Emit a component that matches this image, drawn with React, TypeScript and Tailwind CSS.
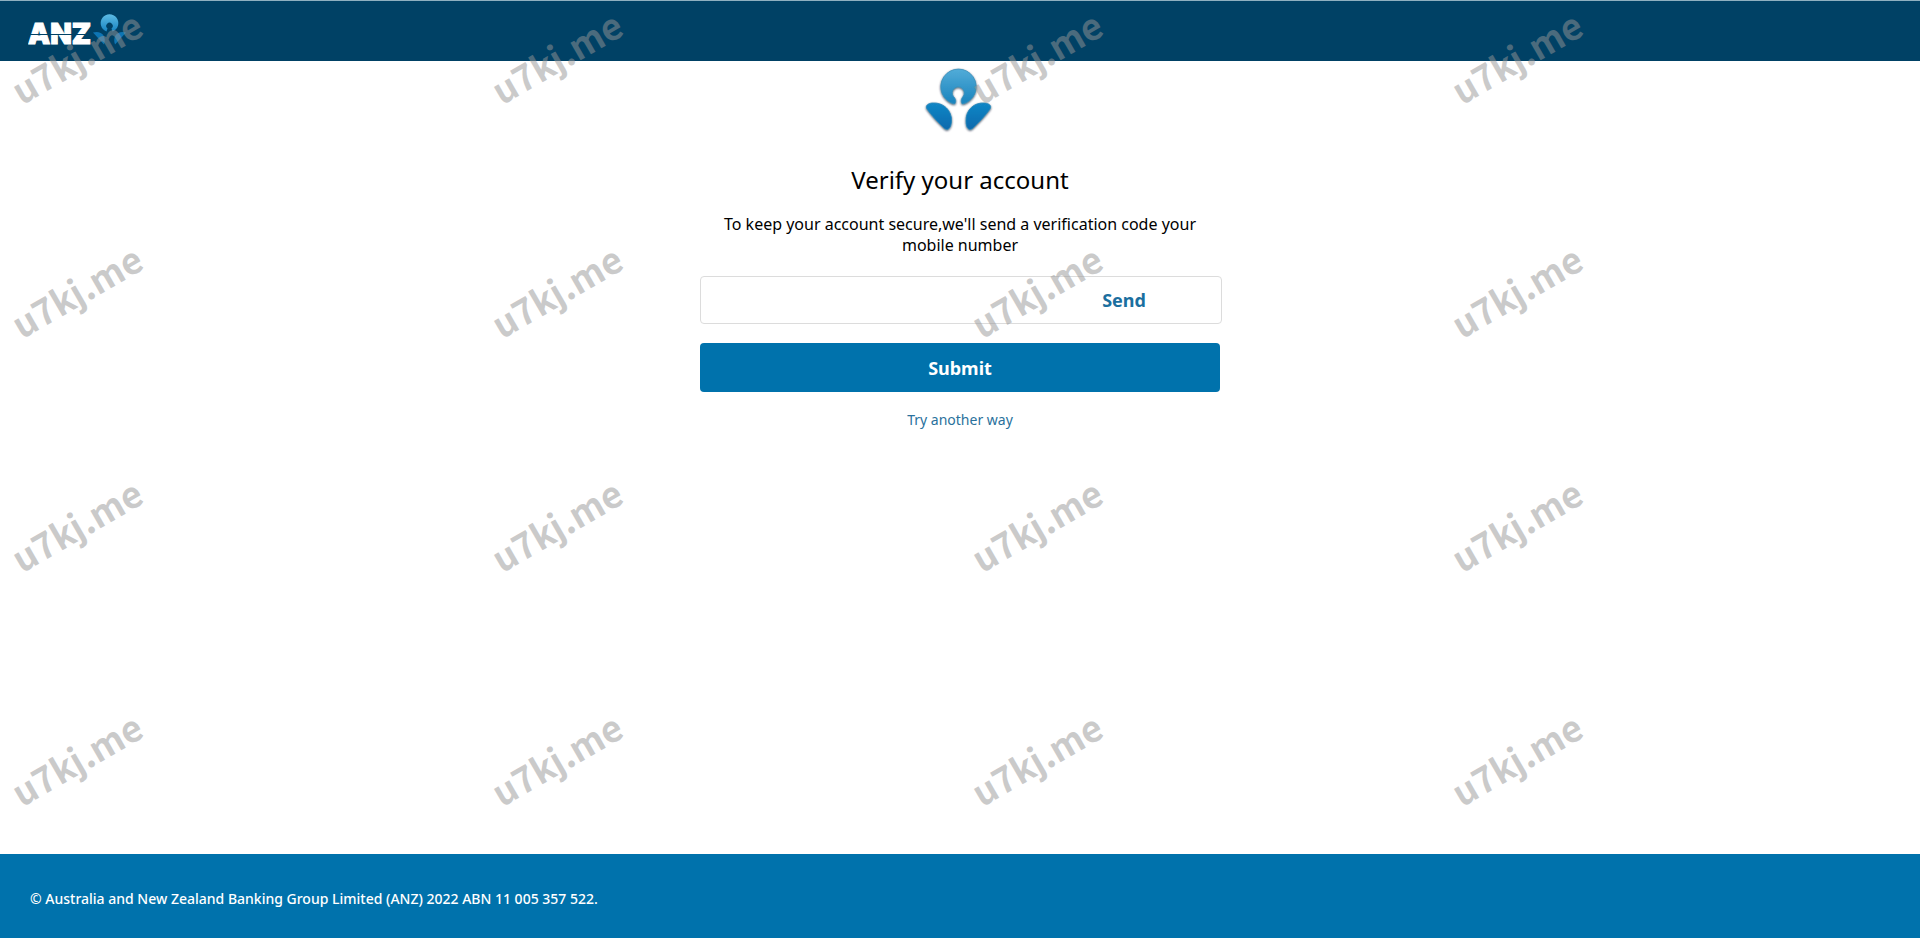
const columns = [0, 1, 2, 3];
const rows = [0, 1, 2, 3];

function Wordmark() {
  return (
    <svg width="104" height="40" viewBox="0 0 104 40" role="img" aria-label="ANZ">
      <defs>
        <linearGradient id="mark-small" x1="0" y1="0" x2="0" y2="1">
          <stop offset="0" stopColor="#5dbbe4" />
          <stop offset="1" stopColor="#1784c2" />
        </linearGradient>
      </defs>
      <text
        x="0"
        y="33"
        fontFamily="Inter, sans-serif"
        fontWeight="900"
        fontSize="28"
        fill="#ffffff"
        stroke="#ffffff"
        strokeWidth="1"
      >
        ANZ
      </text>
      <path d="M0 23.500H64" stroke="#004165" strokeWidth="1" />
      <path
        d="M78.500 20.400A8.800 8.800 0 1 1 84.500 20.400L83.500 17.500A3.200 3.200 0 1 0 79.500 17.500Z"
        fill="url(#mark-small)"
      />
      <path d="M65 21.500C73 19 79 25 76 33.500Z" fill="#0e75b4" />
      <path d="M98 21.500C90 19 84 25 87 33.500Z" fill="#0e75b4" />
    </svg>
  );
}

function LotusMark() {
  return (
    <svg className="overflow-visible" width="68" height="65" viewBox="0 0 68 65" aria-hidden="true">
      <defs>
        <linearGradient id="mark-top" x1="0" y1="0" x2="0" y2="1">
          <stop offset="0" stopColor="#52acd8" />
          <stop offset="1" stopColor="#1983bd" />
        </linearGradient>
        <linearGradient id="mark-leaf" x1="0" y1="0" x2="0" y2="1">
          <stop offset="0" stopColor="#1287c6" />
          <stop offset="1" stopColor="#0969ad" />
        </linearGradient>
        <filter id="mark-shadow" x="-20%" y="-20%" width="140%" height="140%">
          <feDropShadow dx="0" dy="1" stdDeviation="1.2" floodColor="#001f38" floodOpacity="0.75" />
        </filter>
      </defs>
      <g filter="url(#mark-shadow)" strokeWidth="0.8">
        <path
          d="M30.500 35A17.700 17.700 0 1 1 38.500 35C36.500 33 37 30 39 27.500A6 6 0 1 0 29.500 27.500C32 30 32.500 33 30.500 35Z"
          fill="url(#mark-top)"
          stroke="#3a8fba"
        />
        <path
          d="M3 40C1 36.500 4 34.500 8 34C19 33 28 41 27.500 52C27 59 24 62.500 20 59C14 53 8 47 3 40Z"
          fill="url(#mark-leaf)"
          stroke="#2787b9"
        />
        <path
          d="M66 40C68 36.500 65 34.500 61 34C50 33 41.500 41 42 52C42 59 45 62.500 49 59C55 53 61 47 66 40Z"
          fill="url(#mark-leaf)"
          stroke="#2787b9"
        />
      </g>
    </svg>
  );
}

function Watermark() {
  return (
    <div className="pointer-events-none absolute inset-0 overflow-hidden" aria-hidden="true">
      {rows.map((row) => (
        <div key={row} className="grid h-[234px] grid-cols-4">
          {columns.map((column) => (
            <div key={column} className="flex h-[112px] w-[152px] items-center justify-center">
              <span className="-rotate-30 font-['Noto_Sans_CJK_SC','Noto_Sans',sans-serif] text-[36px] leading-none font-bold text-[#969696]/50">
                u7kj.me
              </span>
            </div>
          ))}
        </div>
      ))}
    </div>
  );
}

export default function App() {
  return (
    <div className="relative flex min-h-screen flex-col bg-white font-['Noto_Sans','Open_Sans',sans-serif] text-black">
      <header className="flex h-[61px] items-center border-t border-[#8fb0c0] bg-[#004165] pl-7">
        <Wordmark />
      </header>

      <main className="flex flex-1 flex-col items-center px-4">
        <div className="mt-2 pr-1">
          <LotusMark />
        </div>
        <h1 className="mt-7 text-2xl leading-9">Verify your account</h1>
        <p className="mt-4 w-full max-w-[520px] px-4 text-center text-base leading-[21px]">
          To keep your account secure,we'll send a verification code your mobile number
        </p>
        <div className="mt-5 w-full max-w-[520px]">
          <div className="-mr-0.5 flex h-12 rounded border border-[#dcdcdc]">
            <input
              aria-label="Verification code"
              type="text"
              className="min-w-0 flex-1 bg-transparent px-3 outline-none"
            />
            <button type="button" className="w-[194px] text-lg font-bold text-[#1b6f9f]">
              Send
            </button>
          </div>
          <button type="button" className="mt-[19px] h-[49px] w-full rounded bg-[#0072ac] text-lg font-bold text-white">
            Submit
          </button>
        </div>
        <a href="#" className="mt-[18px] text-sm leading-5 text-[#2a719c]">
          Try another way
        </a>
      </main>

      <footer className="flex h-[84px] items-center bg-[#0072ac] px-[30px] pt-1.5 text-sm font-medium text-white">
        © Australia and New Zealand Banking Group Limited (ANZ) 2022 ABN 11 005 357 522.
      </footer>

      <Watermark />
    </div>
  );
}
